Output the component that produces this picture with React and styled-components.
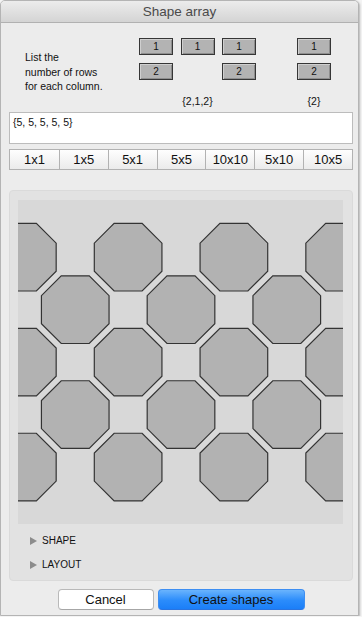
import React from "react";
import styled, { createGlobalStyle } from "styled-components";

const Global = createGlobalStyle`
  html, body { margin: 0; padding: 0; background: #f4f4f4; }
  body { font-family: "Liberation Sans", Arial, sans-serif; }
  * { box-sizing: border-box; }
`;

const Window = styled.div`
  width: 359px;
  height: 616px;
  border: 1px solid #b4b4b4;
  border-radius: 5px 5px 0 0;
  background: #ececec;
  box-shadow: 1px 1px 2px rgba(0, 0, 0, 0.25);
  display: flex;
  flex-direction: column;
  overflow: hidden;
`;

const TitleBar = styled.div`
  height: 22px;
  flex: none;
  background: linear-gradient(#ececec, #d4d4d4);
  border-bottom: 1px solid #b1b1b1;
  display: flex;
  align-items: center;
  justify-content: center;
  font-size: 13.5px;
  color: #4a4a4a;
`;

const Body = styled.div`
  padding: 0 5px 0 8px;
  display: flex;
  flex-direction: column;
`;

const TopSection = styled.div`
  display: flex;
  padding-top: 15px;
`;

const Instructions = styled.div`
  margin-left: 16px;
  width: 114px;
  padding-top: 12px;
  font-size: 10.5px;
  line-height: 14.5px;
  color: #111;
`;

const Groups = styled.div`
  display: flex;
  gap: 41px;
`;

const Group = styled.div`
  display: flex;
  flex-direction: column;
`;

const Columns = styled.div`
  display: flex;
  gap: 7.5px;
  align-items: flex-start;
`;

const Column = styled.div`
  display: flex;
  flex-direction: column;
  gap: 8px;
`;

const RowButton = styled.div`
  width: 34px;
  height: 17px;
  background: #b3b3b3;
  border: 1px solid #363636;
  box-shadow: inset 1px 1px 0 #cfcfcf, inset -1px -1px 0 #8e8e8e;
  display: flex;
  align-items: center;
  justify-content: center;
  font-size: 10px;
  color: #111;
`;

const GroupLabel = styled.div`
  margin-top: 15px;
  text-align: center;
  font-size: 10.5px;
  line-height: 12px;
  color: #111;
`;

const TextArea = styled.div`
  margin-top: 5px;
  height: 32px;
  background: #fff;
  border: 1px solid #bcbcbc;
  padding: 3px 3px;
  font-size: 10.5px;
  line-height: 13px;
  color: #111;
`;

const Segments = styled.div`
  margin-top: 5px;
  height: 21px;
  display: grid;
  grid-template-columns: repeat(7, 1fr);
  border: 1px solid #b2b2b2;
  background: linear-gradient(#fefefe, #ebebeb);
`;

const Segment = styled.div`
  display: flex;
  align-items: center;
  justify-content: center;
  font-size: 13px;
  color: #111;
  border-left: ${(p) => (p.$first ? "none" : "1px solid #b2b2b2")};
`;

const Panel = styled.div`
  margin-top: 20px;
  height: 391px;
  background: #e2e2e2;
  border: 1px solid #dadada;
  border-radius: 4px;
  padding: 9px 8px 4px 8px;
  display: flex;
  flex-direction: column;
`;

const Canvas = styled.svg`
  display: block;
  width: 325px;
  height: 326px;
  background: #d8d8d8;
  margin-bottom: 4px;
`;

const Disclosure = styled.div`
  height: 24px;
  display: flex;
  align-items: center;
  padding-left: 12px;
  font-size: 10px;
  color: #111;
`;

const Triangle = styled.span`
  width: 0;
  height: 0;
  border-top: 4.5px solid transparent;
  border-bottom: 4.5px solid transparent;
  border-left: 7px solid #8c8c8c;
  margin-right: 5px;
  margin-top: 2px;
`;

const Footer = styled.div`
  margin-top: 8px;
  display: flex;
  justify-content: center;
  gap: 4px;
`;

const Button = styled.div`
  height: 21px;
  width: ${(p) => p.$w}px;
  border-radius: 4px;
  display: flex;
  align-items: center;
  justify-content: center;
  font-size: 13px;
  color: #111;
  background: ${(p) =>
    p.$primary ? "linear-gradient(#6ab4fd, #2b8cfb 55%, #1b7ff8)" : "#fff"};
  border: 1px solid ${(p) => (p.$primary ? "#3d8ef2" : "#b9b9b9")};
  border-bottom-color: ${(p) => (p.$primary ? "#2a74e0" : "#a6a6a6")};
`;

const segs = ["1x1", "1x5", "5x1", "5x5", "10x10", "5x10", "10x5"];

function octagon(cx, cy, a) {
  const h = a * Math.tan(Math.PI / 8);
  const pts = [
    [-h, -a], [h, -a], [a, -h], [a, h], [h, a], [-h, a], [-a, h], [-a, -h],
  ];
  return pts.map(([x, y]) => `${(cx + x).toFixed(2)},${(cy + y).toFixed(2)}`).join(" ");
}

const shapes = [];
for (let j = 0; j < 5; j++) {
  for (let k = 0; k < 7; k++) {
    if ((k + j) % 2 !== 0) continue;
    shapes.push([3.5 + 53.17 * k, 57.5 + 52.75 * j]);
  }
}

export default function App() {
  return (
    <>
      <Global />
      <Window>
        <TitleBar>Shape array</TitleBar>
        <Body>
          <TopSection>
            <Instructions>
              List the
              <br />
              number of rows
              <br />
              for each column.
            </Instructions>
            <Groups>
              <Group>
                <Columns>
                  <Column>
                    <RowButton>1</RowButton>
                    <RowButton>2</RowButton>
                  </Column>
                  <Column>
                    <RowButton>1</RowButton>
                  </Column>
                  <Column>
                    <RowButton>1</RowButton>
                    <RowButton>2</RowButton>
                  </Column>
                </Columns>
                <GroupLabel>{"{2,1,2}"}</GroupLabel>
              </Group>
              <Group>
                <Columns>
                  <Column>
                    <RowButton>1</RowButton>
                    <RowButton>2</RowButton>
                  </Column>
                </Columns>
                <GroupLabel>{"{2}"}</GroupLabel>
              </Group>
            </Groups>
          </TopSection>
          <TextArea>{"{5, 5, 5, 5, 5}"}</TextArea>
          <Segments>
            {segs.map((s, i) => (
              <Segment key={s} $first={i === 0}>
                {s}
              </Segment>
            ))}
          </Segments>
          <Panel>
            <Canvas viewBox="0 0 325 326">
              {shapes.map(([x, y], i) => (
                <polygon
                  key={i}
                  points={octagon(x, y, 34)}
                  fill="#b2b2b2"
                  stroke="#333"
                  strokeWidth="1.2"
                />
              ))}
            </Canvas>
            <Disclosure>
              <Triangle />
              SHAPE
            </Disclosure>
            <Disclosure>
              <Triangle />
              LAYOUT
            </Disclosure>
          </Panel>
          <Footer>
            <Button $w={96}>Cancel</Button>
            <Button $w={147} $primary>
              Create shapes
            </Button>
          </Footer>
        </Body>
      </Window>
    </>
  );
}
